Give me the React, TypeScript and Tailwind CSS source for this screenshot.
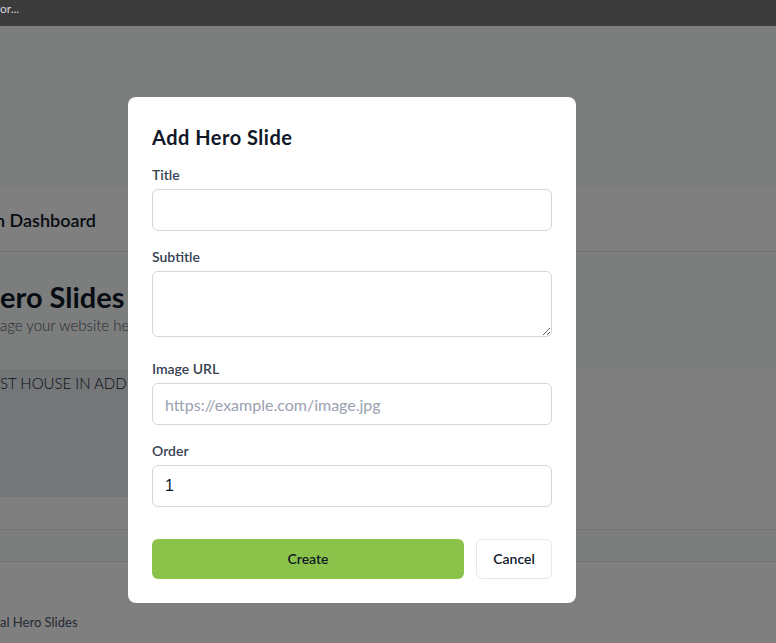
import { ReactNode } from "react";

interface FieldProps {
  label: string;
  children: ReactNode;
}

const Field = ({ label, children }: FieldProps) => {
  return (
    <div className="flex flex-col">
      <label className="text-sm font-semibold text-gray-700 mb-1">{label}</label>
      {children}
    </div>
  );
};

const inputCls =
  "w-full h-[42px] px-3 border border-gray-300 rounded-md text-base text-gray-900 placeholder:text-gray-400 outline-none";

const App = () => {
  return (
    <div className="relative w-[776px] h-[643px] overflow-hidden bg-gray-50 font-['Lato',sans-serif]">
      <div className="h-[26px] bg-[#3b3b3b] text-[12px] text-gray-300 pt-[1px] leading-[16px] relative z-20">
        or...
      </div>

      {/* page behind the dialog */}
      <div className="flex flex-col">
        <div className="h-[163px]" />
        <div className="h-[63px] bg-white border-b border-gray-200 flex items-center">
          <h1 className="text-lg font-semibold text-gray-900 -ml-[5px]">n Dashboard</h1>
        </div>
        <div className="h-[117px] pt-[27px]">
          <h2 className="text-[29px] leading-[35px] font-bold text-gray-900">ero Slides</h2>
          <p className="text-[15px] text-gray-600 font-light">age your website hero slides here</p>
        </div>
        <div className="bg-white">
          <div className="h-[161px] border-b border-gray-200 flex">
            <div className="w-[340px] h-[128px] bg-[#e9edf1] pt-[3px]">
              <p className="text-[15px] text-gray-900 font-light">ST HOUSE IN ADDIS ABABA</p>
            </div>
          </div>
          <div className="h-[32px] bg-gray-50 border-b border-gray-200" />
          <div className="h-[80px] pt-[51px]">
            <p className="text-[13px] text-gray-600">al Hero Slides</p>
          </div>
        </div>
      </div>

      {/* overlay */}
      <div className="absolute inset-x-0 top-[26px] bottom-0 bg-black/50 z-10" />

      {/* dialog */}
      <div className="absolute left-[128px] top-[97px] w-[448px] bg-white rounded-lg p-6 z-20">
        <h3 className="text-xl font-bold text-gray-900 tracking-[0.5px] pt-[2px] mb-[14px]">Add Hero Slide</h3>
        <form className="flex flex-col gap-4">
          <Field label="Title">
            <input className={inputCls} />
          </Field>
          <Field label="Subtitle">
            <textarea className="w-full h-[66px] px-3 py-2 border border-gray-300 rounded-md text-base outline-none align-top" />
          </Field>
          <div className="flex flex-col mt-[6px]">
            <label className="text-sm font-semibold text-gray-700 mb-1">Image URL</label>
            <input className={inputCls} placeholder="https://example.com/image.jpg" />
          </div>
          <Field label="Order">
            <input className={inputCls + " font-['Liberation_Sans',sans-serif]"} defaultValue="1" />
          </Field>
          <div className="flex gap-3 mt-4">
            <button
              type="button"
              className="flex-1 h-10 rounded-md bg-[#8bc34a] text-sm font-semibold text-gray-900"
            >
              Create
            </button>
            <button
              type="button"
              className="w-[76px] h-10 rounded-md border border-gray-200 bg-white text-sm font-semibold text-gray-900"
            >
              Cancel
            </button>
          </div>
        </form>
      </div>
    </div>
  );
};

export default App;
